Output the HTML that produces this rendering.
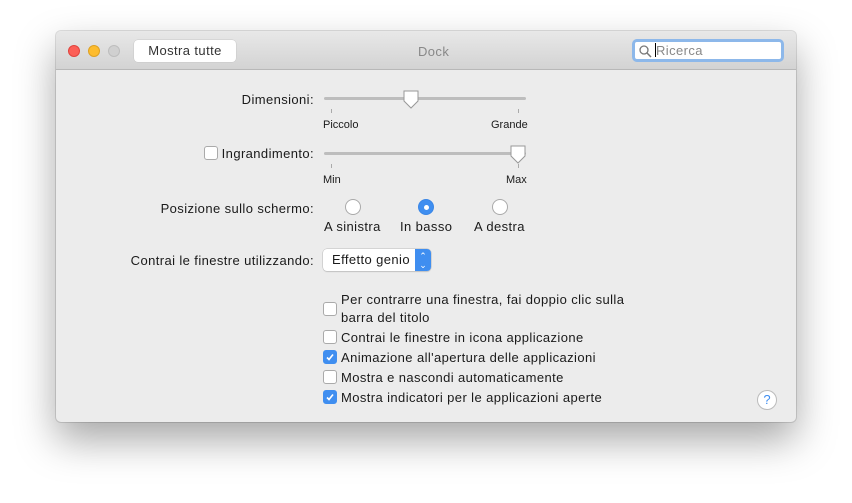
<!DOCTYPE html>
<html><head><meta charset="utf-8"><style>
*{margin:0;padding:0;box-sizing:border-box}
body{width:852px;height:503px;background:#fff;position:relative;overflow:hidden;font-family:"Liberation Sans",sans-serif;font-size:13px;color:#1a1a1a;letter-spacing:.4px}
.win{position:absolute;left:56px;top:31px;width:740px;height:391px;background:#ececec;border-radius:5px;box-shadow:0 18px 40px rgba(0,0,0,.35),0 0 0 1px rgba(0,0,0,.12)}
.tb{position:absolute;left:0;top:0;width:740px;height:39px;background:linear-gradient(#e8e8e8,#d3d3d3);border-bottom:1px solid #b8b8b8;border-radius:5px 5px 0 0}
.a{position:absolute;white-space:nowrap}
.dot{position:absolute;width:12px;height:12px;border-radius:50%;top:14px}
.btn{position:absolute;left:78px;top:9px;width:102px;height:22px;background:#fff;border-radius:4px;box-shadow:0 0 0 .5px #c8c8c8;text-align:center;line-height:22px;font-size:13px;color:#333}
.search{position:absolute;left:576px;top:8px;width:152px;height:23px;background:#fff;border:3px solid #8db8ea;border-radius:5px}
.track{position:absolute;height:3px;background:#bdbdbd;border-radius:2px}
.tick{position:absolute;width:1px;height:4px;background:#aaa}
.sm{font-size:11px;letter-spacing:0}
.cb{position:absolute;width:14px;height:14px;border:1px solid #aaa;background:#fff;border-radius:3px}
.cb.on{background:#3f8ef0;border-color:#3f8ef0}
.radio{position:absolute;width:16px;height:16px;border-radius:50%;border:1px solid #aaa;background:#fff}
</style></head><body>
<div class="win">
<div class="tb">
<div class="dot" style="left:12px;background:#fc5f57;border:1px solid #e0443e"></div>
<div class="dot" style="left:32px;background:#fdbc2e;border:1px solid #dea123"></div>
<div class="dot" style="left:52px;background:#d0d0d0;border:1px solid #bdbdbd"></div>
<div class="btn">Mostra tutte</div>
<div class="a" style="left:362px;top:13px;color:#888">Dock</div>
<div class="search">
<svg style="position:absolute;left:4px;top:3px" width="13" height="13" viewBox="0 0 13 13"><circle cx="5" cy="5" r="4" fill="none" stroke="#777" stroke-width="1.3"/><path d="M8 8l4 4" stroke="#777" stroke-width="1.5"/></svg>
<div style="position:absolute;left:20px;top:1px;width:1px;height:14px;background:#000"></div>
<div class="a" style="left:21px;top:1px;color:#888">Ricerca</div>
</div>
</div>

<div class="a" style="right:482px;top:61px">Dimensioni:</div>
<div class="track" style="left:268px;top:66px;width:202px"></div>
<svg style="position:absolute;left:346px;top:59px" width="18" height="20" viewBox="0 0 18 20"><path d="M2 1h14v10l-7 7-7-7z" fill="#fff" stroke="#999"/></svg>
<div class="tick" style="left:275px;top:78px"></div><div class="tick" style="left:462px;top:78px"></div>
<div class="a sm" style="left:267px;top:88px">Piccolo</div>
<div class="a sm" style="left:435px;top:88px">Grande</div>

<div class="cb" style="left:148px;top:115px"></div>
<div class="a" style="right:482px;top:115px">Ingrandimento:</div>
<div class="track" style="left:268px;top:121px;width:202px"></div>
<svg style="position:absolute;left:453px;top:114px" width="18" height="20" viewBox="0 0 18 20"><path d="M2 1h14v10l-7 7-7-7z" fill="#fff" stroke="#999"/></svg>
<div class="tick" style="left:275px;top:133px"></div><div class="tick" style="left:462px;top:133px"></div>
<div class="a sm" style="left:267px;top:143px">Min</div>
<div class="a sm" style="left:450px;top:143px">Max</div>

<div class="a" style="right:482px;top:170px">Posizione sullo schermo:</div>
<div class="radio" style="left:289px;top:168px"></div>
<div class="radio" style="left:362px;top:168px;background:#3f8ef0;border-color:#3a86e6"><div style="position:absolute;left:5px;top:5px;width:5px;height:5px;border-radius:50%;background:#fff"></div></div>
<div class="radio" style="left:436px;top:168px"></div>
<div class="a" style="left:268px;top:188px">A sinistra</div>
<div class="a" style="left:344px;top:188px">In basso</div>
<div class="a" style="left:418px;top:188px">A destra</div>

<div class="a" style="right:482px;top:222px">Contrai le finestre utilizzando:</div>
<div style="position:absolute;left:267px;top:218px;width:108px;height:22px;background:#fff;border-radius:4px;box-shadow:0 0 0 .5px #bbb,0 1px 1px rgba(0,0,0,.15)">
<div class="a" style="left:9px;top:3px">Effetto genio</div>
<div style="position:absolute;right:0;top:0;width:16px;height:22px;background:#3f8ef0;border-radius:0 4px 4px 0;color:#fff;font-size:9px;text-align:center;line-height:9px;padding-top:3px;letter-spacing:0">⌃<br>⌄</div>
</div>

<div class="cb" style="left:267px;top:271px"></div>
<div class="a" style="left:285px;top:261px">Per contrarre una finestra, fai doppio clic sulla</div>
<div class="a" style="left:285px;top:279px">barra del titolo</div>
<div class="cb" style="left:267px;top:299px"></div>
<div class="a" style="left:285px;top:299px">Contrai le finestre in icona applicazione</div>
<div class="cb on" style="left:267px;top:319px"><svg width="12" height="12" viewBox="0 0 12 12" style="position:absolute;left:0;top:0"><path d="M3 6.5l2 2 4-5" fill="none" stroke="#fff" stroke-width="1.6"/></svg></div>
<div class="a" style="left:285px;top:319px">Animazione all'apertura delle applicazioni</div>
<div class="cb" style="left:267px;top:339px"></div>
<div class="a" style="left:285px;top:339px">Mostra e nascondi automaticamente</div>
<div class="cb on" style="left:267px;top:359px"><svg width="12" height="12" viewBox="0 0 12 12" style="position:absolute;left:0;top:0"><path d="M3 6.5l2 2 4-5" fill="none" stroke="#fff" stroke-width="1.6"/></svg></div>
<div class="a" style="left:285px;top:359px">Mostra indicatori per le applicazioni aperte</div>

<div style="position:absolute;left:701px;top:359px;width:20px;height:20px;border-radius:50%;background:#fff;border:1px solid #bbb;text-align:center;line-height:18px;color:#3f8ef0;font-size:13px;letter-spacing:0">?</div>
</div>
</body></html>
